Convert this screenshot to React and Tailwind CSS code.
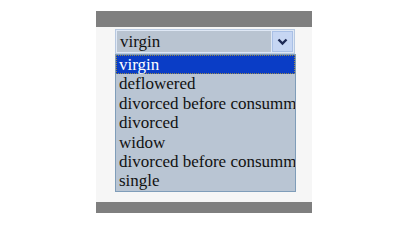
import React from 'react';

const options = [
    'virgin',
    'deflowered',
    'divorced before consummation',
    'divorced',
    'widow',
    'divorced before consummation',
    'single',
];

const App = () => {
    return (
        <div className="w-[405px] h-[230px] bg-white pt-[11px] pl-[96px]" style={{ fontFamily: '"Liberation Serif", serif' }}>
            <div className="w-[216px]">
                <div className="h-[16px] bg-[#7f7f7f]" />
                <div className="h-[175px] bg-[#f6f6f6] pl-[19px] pt-[2px]">
                    {/* closed select */}
                    <div className="flex w-[180px] h-[25px] border border-[#b7c8e0] bg-[#dfe8f5] p-[1px]">
                        <div className="flex-1 bg-[#b9c4d1] pl-[3px] text-[17px] leading-[21px] text-[#111]">virgin</div>
                        <div className="w-[21px] ml-[1px] flex items-center justify-center bg-[#c6d6f3] border border-[#a9c0e6]">
                            <svg width="11" height="8" viewBox="0 0 11 8">
                                <path d="M1.5 1.5 L5.5 5.5 L9.5 1.5" fill="none" stroke="#1d2a55" strokeWidth="2.4" />
                            </svg>
                        </div>
                    </div>
                    {/* open list */}
                    <div className="w-[181px] h-[138px] border border-[#7f9db9] bg-[#b9c5d3] overflow-hidden">
                        {options.map((opt, index) => (
                            <div
                                key={index}
                                className={
                                    index === 0
                                        ? 'h-[19.4px] pl-[2px] text-[17px] leading-[18px] whitespace-nowrap bg-[#0a3dc6] text-white border border-dotted border-[#9a8a4a]'
                                        : 'h-[19.4px] pl-[3px] text-[17px] leading-[19px] whitespace-nowrap text-[#111]'
                                }
                            >
                                {opt}
                            </div>
                        ))}
                    </div>
                </div>
                <div className="h-[11px] bg-[#7f7f7f]" />
            </div>
        </div>
    );
};

export default App;
